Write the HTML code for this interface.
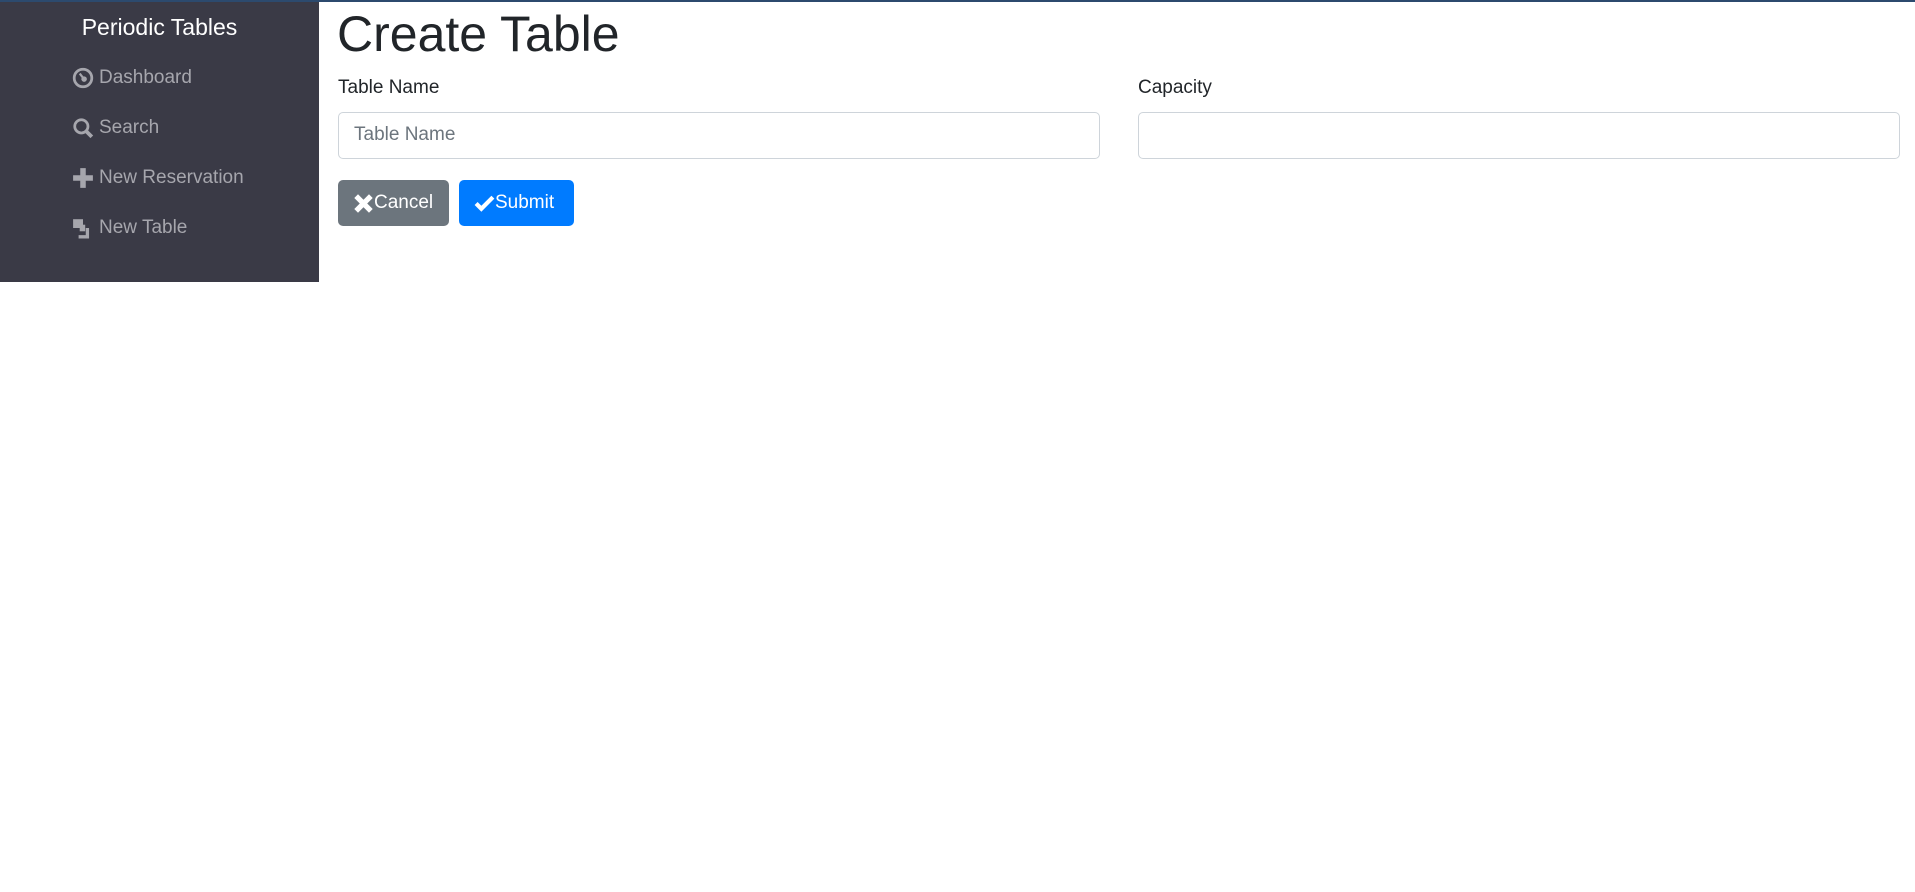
<!DOCTYPE html>
<html><head><meta charset="utf-8"><style>
*{box-sizing:border-box;margin:0;padding:0}
body{width:1915px;height:892px;background:#fff;font-family:"Liberation Sans",sans-serif;color:#212529;position:relative;overflow:hidden;border-top:2px solid #2c4a6e}
.side{position:absolute;left:0;top:0;width:319px;height:280px;background:#3a3a46}
.brand{position:absolute;left:0;width:319px;top:12px;text-align:center;color:#fff;font-size:23px}
.nav{position:absolute;left:72px;color:#a6a6ad;font-size:19px;display:flex;align-items:center;height:30px}
.nav svg{width:22px;height:22px;margin-right:5px}
h1{position:absolute;left:337px;top:3px;font-size:50px;font-weight:500;letter-spacing:0}
label{position:absolute;top:75px;font-size:19px}
.in{position:absolute;top:110px;height:47px;border:1px solid #ced4da;border-radius:5px;font-size:19px;color:#6c757d;padding:11px 15px}
.btn{position:absolute;top:178px;height:46px;border-radius:5px;color:#fff;font-size:19px;display:flex;align-items:center;padding-left:15px}
.btn svg{width:21px;height:21px}
</style></head><body>
<div class="side">
<div class="brand">Periodic Tables</div>
<div class="nav" style="top:61px"><svg viewBox="0 0 20 20"><circle cx="10" cy="10" r="8" fill="none" stroke="#a6a6ad" stroke-width="2.5"/><circle cx="11" cy="11" r="2.5" fill="#a6a6ad"/><path d="M11 11L7 6" stroke="#a6a6ad" stroke-width="2"/></svg>Dashboard</div>
<div class="nav" style="top:111px"><svg viewBox="0 0 20 20"><circle cx="8.5" cy="8.5" r="6" fill="none" stroke="#a6a6ad" stroke-width="2.5"/><path d="M13 13l5 5" stroke="#a6a6ad" stroke-width="3.5"/></svg>Search</div>
<div class="nav" style="top:161px"><svg viewBox="0 0 20 20"><path d="M10 1v18M1 10h18" stroke="#a6a6ad" stroke-width="5"/></svg>New Reservation</div>
<div class="nav" style="top:211px"><svg viewBox="0 0 20 20"><rect x="1" y="2" width="9" height="8" fill="#a6a6ad"/><rect x="7" y="7" width="5" height="6" fill="#a6a6ad"/><path d="M14 10v8H6" fill="none" stroke="#a6a6ad" stroke-width="3"/></svg>New Table</div>
</div>
<h1>Create Table</h1>
<label style="left:338px">Table Name</label>
<label style="left:1138px">Capacity</label>
<div class="in" style="left:338px;width:762px">Table Name</div>
<div class="in" style="left:1138px;width:762px"></div>
<div class="btn" style="left:338px;width:111px;background:#6c757d"><svg viewBox="0 0 20 20"><path d="M3 3l14 14M17 3L3 17" stroke="#fff" stroke-width="5"/></svg>Cancel</div>
<div class="btn" style="left:459px;width:115px;background:#007bff"><svg viewBox="0 0 20 20"><path d="M2 10l5 5L18 4" fill="none" stroke="#fff" stroke-width="4"/></svg>Submit</div>
</body></html>
